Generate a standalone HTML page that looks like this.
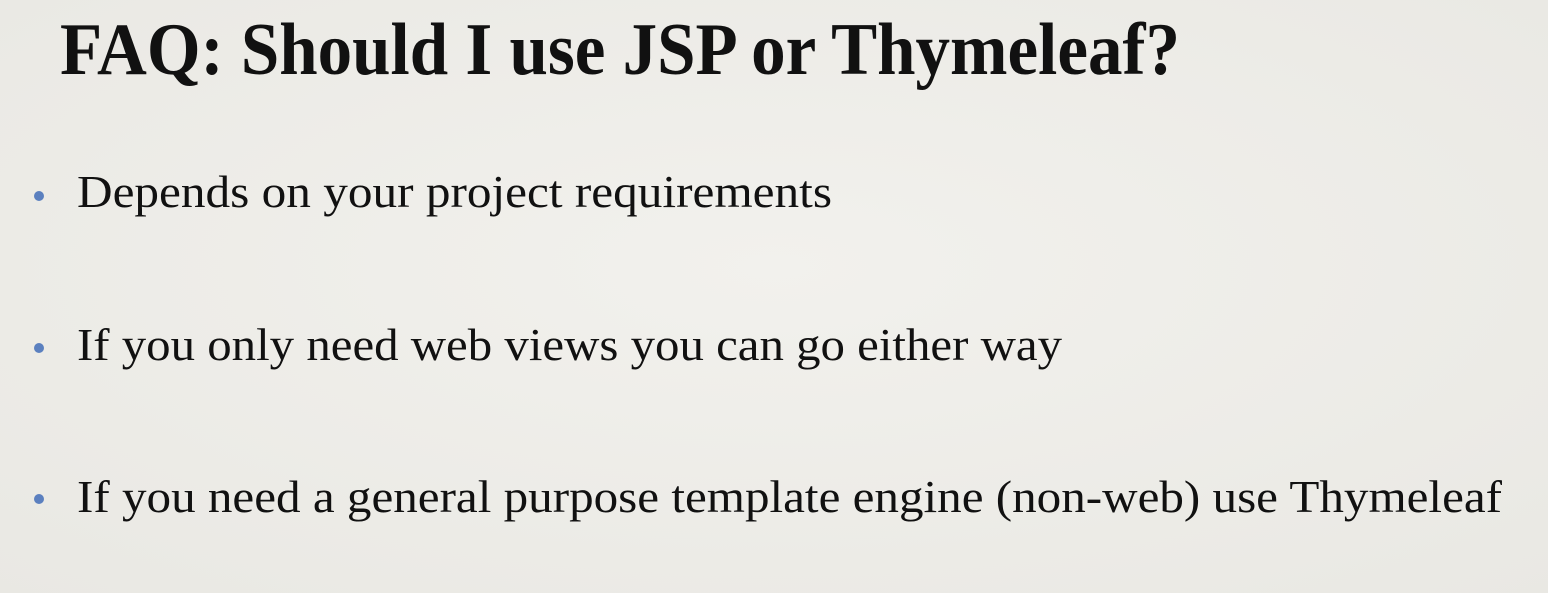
<!DOCTYPE html>
<html><head><meta charset="utf-8"><style>
html,body{margin:0;padding:0;width:1548px;height:593px;overflow:hidden;background:#eeede9;}
</style></head><body>
<svg width="1548" height="593" xmlns="http://www.w3.org/2000/svg">
<defs>
<radialGradient id="g" cx="50%" cy="45%" r="75%">
<stop offset="0" stop-color="#f2f1ed"/><stop offset="1" stop-color="#e9e8e3"/>
</radialGradient>
</defs>
<rect width="1548" height="593" fill="url(#g)"/>
<text x="60" y="74" font-family="Liberation Serif, serif" font-weight="bold" font-size="74" fill="#111" textLength="1120" lengthAdjust="spacingAndGlyphs">FAQ: Should I use JSP or Thymeleaf?</text>
<g font-family="Liberation Serif, serif" font-size="46" fill="#111">
<text x="77" y="207" textLength="755" lengthAdjust="spacingAndGlyphs">Depends on your project requirements</text>
<text x="77" y="360" textLength="985" lengthAdjust="spacingAndGlyphs">If you only need web views you can go either way</text>
<text x="77" y="512" textLength="1425" lengthAdjust="spacingAndGlyphs">If you need a general purpose template engine (non-web) use Thymeleaf</text>
</g>
<g fill="#5b80bf">
<circle cx="39" cy="196" r="5"/>
<circle cx="39" cy="348" r="5"/>
<circle cx="39" cy="499" r="5"/>
</g>
</svg>
</body></html>
